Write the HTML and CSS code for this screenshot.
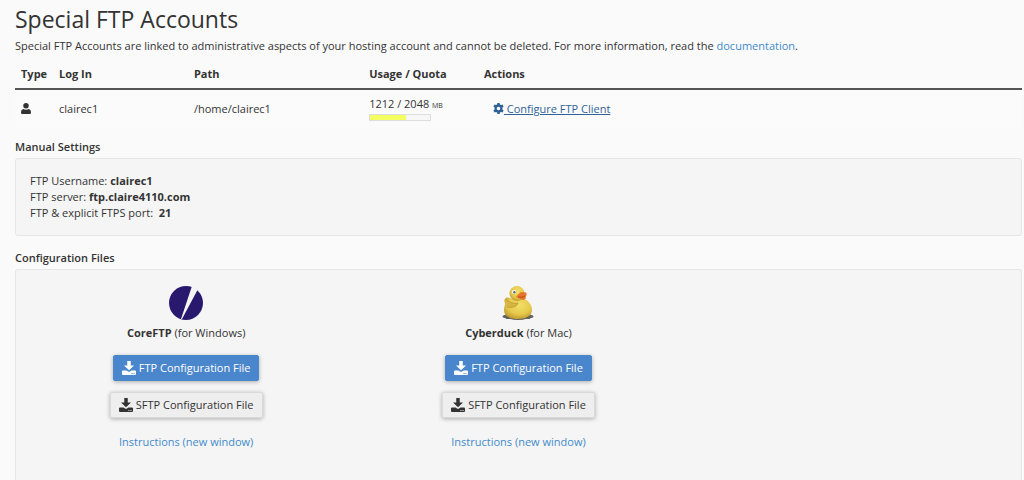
FILE: index.html
```html
<!DOCTYPE html>
<html lang="en">
<head>
<meta charset="utf-8">
<title>Special FTP Accounts</title>
<link rel="stylesheet" href="styles.css">
</head>
<body>
<svg class="sprite" aria-hidden="true">
  <symbol id="download" viewBox="0 0 28 28">
    <path d="M10.500 0h7v9H24L14 18.500 4 9h6.500z"/>
    <path fill-rule="evenodd" d="M2 19h7l3 2q2 1 4 0l3-2h7q2 0 2 2v5q0 2-2 2H2q-2 0-2-2v-5q0-2 2-2zM19 24v2h2v-2zM23 24v2h2v-2z"/>
  </symbol>
</svg>
<main class="page">
  <h1 class="title">Special FTP Accounts</h1>
  <p class="intro">Special FTP Accounts are linked to administrative aspects of your hosting account and cannot be deleted. For more information, read the <a class="link" href="#documentation">documentation</a>.</p>

  <table class="accounts">
    <colgroup><col class="col-type"><col class="col-login"><col class="col-path"><col class="col-usage"><col></colgroup>
    <thead>
      <tr><th>Type</th><th>Log In</th><th>Path</th><th>Usage / Quota</th><th>Actions</th></tr>
    </thead>
    <tbody>
      <tr>
        <td><svg class="user" viewBox="0 0 18 20" role="img" aria-label="User"><circle cx="9" cy="5" r="5"/><path d="M4 11q5 2.500 10 0 4 1 4 5v2q0 2-2 2H2q-2 0-2-2v-2q0-4 4-5z"/></svg></td>
        <td>clairec1</td>
        <td>/home/clairec1</td>
        <td>1212 / 2048 <span class="unit">MB</span><div class="meter"><div class="meter-fill" style="width:59%"></div></div></td>
        <td class="action"><a class="configure" href="#configure"><svg class="gear" viewBox="0 0 20 20" aria-hidden="true"><path fill-rule="evenodd" d="M8 0h4l.6 2.700 2 1.100 2.700-.9 2 3.400-2.100 1.900v3.600l2.100 1.900-2 3.400-2.700-.9-2 1.100L12 20H8l-.6-2.700-2-1.100-2.700.9-2-3.400 2.100-1.900V8.200L.7 6.300l2-3.400 2.700.9 2-1.100zM10 6.700a3.300 3.300 0 1 0 0 6.600 3.300 3.300 0 0 0 0-6.600z"/></svg> Configure FTP Client</a></td>
      </tr>
    </tbody>
  </table>

  <h2 class="heading">Manual Settings</h2>
  <section class="panel">
    <div>FTP Username: <b>clairec1</b></div>
    <div>FTP server: <b>ftp.claire4110.com</b></div>
    <div>FTP &amp; explicit FTPS port: &nbsp;<b>21</b></div>
  </section>

  <h2 class="heading">Configuration Files</h2>
  <section class="panel panel-files">
    <div class="clients">
      <article class="client">
        <svg class="logo" viewBox="0 0 34 34" role="img" aria-label="CoreFTP"><circle cx="17" cy="17" r="17" fill="#29196e"/><path d="M23 0L12 33h1L28.500 4 26 0z" fill="#f5f5f5"/></svg>
        <div class="name"><b>CoreFTP</b> (for Windows)</div>
        <button class="button primary" type="button"><svg class="icon" aria-hidden="true"><use href="#download"/></svg>FTP Configuration File</button>
        <button class="button" type="button"><svg class="icon" aria-hidden="true"><use href="#download"/></svg>SFTP Configuration File</button>
        <a class="link" href="#coreftp">Instructions (new window)</a>
      </article>
      <article class="client">
        <svg class="logo" viewBox="0 0 34 34" role="img" aria-label="Cyberduck">
          <defs>
            <radialGradient id="body" cx=".55" cy=".35" r=".7"><stop offset="0" stop-color="#f3df68"/><stop offset=".6" stop-color="#e6c94c"/><stop offset="1" stop-color="#b9932c"/></radialGradient>
            <radialGradient id="shade"><stop offset="0" stop-color="#444"/><stop offset=".9" stop-color="#666"/><stop offset="1" stop-color="#bbb" stop-opacity="0"/></radialGradient>
          </defs>
          <ellipse cx="17" cy="30.500" rx="16.500" ry="3.500" fill="url(#shade)"/>
          <path d="M5 12c2-1 4 0 6 1h12c5 2 8 6 8 11 0 6-6 9-14 9-9 0-14-3-14-9 0-3 1-5 1-7-1-1-1-4 1-5z" fill="url(#body)"/>
          <path d="M5 13c2 3 7 5 12 4-1 4-6 5-11 4" fill="#d7b540" stroke="#b08b2b" stroke-width=".6"/>
          <circle cx="16" cy="7.500" r="7.500" fill="url(#body)"/>
          <circle cx="13" cy="6" r="2" fill="#fff"/><circle cx="13.300" cy="6.300" r="1.200" fill="#566d77"/>
          <path d="M15 11q2-3 5-5l5 .5q1 1 .5 2.500l-.8 1.500q.8 2-1 3-3 1-5-1z" fill="#e7752b"/>
          <path d="M17 11q4 1 7-1" fill="none" stroke="#bd4c19"/>
        </svg>
        <div class="name"><b>Cyberduck</b> (for Mac)</div>
        <button class="button primary" type="button"><svg class="icon" aria-hidden="true"><use href="#download"/></svg>FTP Configuration File</button>
        <button class="button" type="button"><svg class="icon" aria-hidden="true"><use href="#download"/></svg>SFTP Configuration File</button>
        <a class="link" href="#cyberduck">Instructions (new window)</a>
      </article>
    </div>
  </section>
</main>
</body>
</html>
```
FILE: styles.css
```css
* { box-sizing: border-box; }
body {
  margin: 0;
  background: #fafafa;
  color: #333;
  font: 11px/16px "Open Sans", sans-serif;
}
b { font-weight: 700; }
.sprite { display: none; }
.page {
  display: flex;
  flex-direction: column;
  min-height: 100vh;
  padding: 6px 2px 0 15px;
}
.title {
  margin: 0 0 6px;
  font-size: 23px;
  line-height: 26px;
  font-weight: 500;
}
.intro { margin: 0 0 8px; }
.link { color: #428bca; text-decoration: none; }

.accounts {
  width: 100%;
  margin-bottom: 12px;
  table-layout: fixed;
  border-collapse: separate;
  border-spacing: 0;
}
.col-type { width: 38px; }
.col-login { width: 13.4%; }
.col-path { width: 17.4%; }
.col-usage { width: 11.4%; }
.accounts th {
  padding: 4px 6px 6px;
  border-bottom: 2px solid #555;
  text-align: left;
  font-weight: 700;
  white-space: nowrap;
}
.accounts td {
  height: 37px;
  padding: 4px 6px;
  background: #fbfbfb;
  vertical-align: middle;
}
.accounts .action { padding-left: 15px; }
.user {
  display: block;
  width: 10px;
  height: 11px;
  fill: #333;
}
.unit { font-size: 7px; }
.meter {
  width: 62px;
  height: 7px;
  border: 1px solid #ddd;
  background: #f7f7f7;
}
.meter-fill { height: 100%; background: #f4ff62; }
.configure { color: #2f6398; text-decoration: underline; }
.gear {
  width: 11px;
  height: 11px;
  fill: currentColor;
  vertical-align: -1px;
}

.heading {
  margin: 0 0 3px;
  font-size: 11px;
  line-height: 16px;
  font-weight: 600;
}
.panel {
  margin-bottom: 14px;
  padding: 14px;
  border: 1px solid #e6e6e6;
  border-radius: 3px;
  background: #f5f5f5;
}
.panel-files {
  flex: 1;
  margin-bottom: 0;
  border-bottom: 0;
  border-radius: 3px 3px 0 0;
}
.clients {
  display: grid;
  grid-template-columns: repeat(3, 1fr);
  margin: 0 -10px;
}
.client {
  display: flex;
  flex-direction: column;
  align-items: center;
}
.logo { width: 34px; height: 34px; margin: 2px 0 5px; }
.name { margin-bottom: 14px; }
.button {
  display: flex;
  align-items: center;
  gap: 3px;
  height: 26px;
  margin-bottom: 11px;
  padding: 0 8px;
  border: 1px solid #dadada;
  border-radius: 2px;
  background: #eee;
  box-shadow: 0 1px 4px rgba(0, 0, 0, .3);
  color: #333;
  font: inherit;
}
.button.primary {
  border-color: #4a86cb;
  background: #4a86cb;
  color: #fff;
}
.button + .link { margin-top: 5px; }
.icon { width: 14px; height: 14px; fill: currentColor; }
```
